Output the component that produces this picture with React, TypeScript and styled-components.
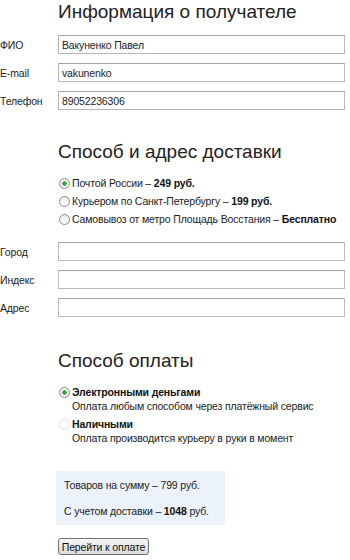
import React from "react";
import styled, { createGlobalStyle } from "styled-components";

const Global = createGlobalStyle`
  html, body { margin: 0; padding: 0; background: #fff; }
  body { font-family: "Liberation Sans", Arial, sans-serif; color: #222; font-size: 10.5px; letter-spacing: -0.15px; }
`;

const Page = styled.div`
  width: 350px;
  padding: 0 5px 0 0;
  box-sizing: border-box;
`;

const Heading = styled.h2<{ $top: number; $bottom: number }>`
  margin: ${(p) => p.$top}px 0 ${(p) => p.$bottom}px 58px;
  font-size: 19px;
  font-weight: normal;
  letter-spacing: 0;
  line-height: 24px;
  color: #222;
`;

const Fields = styled.div<{ $top?: number }>`
  display: flex;
  flex-direction: column;
  gap: 9px;
  margin-top: ${(p) => p.$top ?? 0}px;
`;

const Row = styled.label`
  display: grid;
  grid-template-columns: 58px 1fr;
  align-items: center;
`;

const Label = styled.span`
  color: #222;
`;

const Input = styled.input`
  height: 19px;
  box-sizing: border-box;
  border: 1px solid #b8b8b8;
  border-top-color: #a4a4a4;
  padding: 0 3px;
  font-family: "Liberation Sans", Arial, sans-serif;
  font-size: 10.5px;
  letter-spacing: -0.15px;
  color: #222;
  outline: none;
`;

const Options = styled.div<{ $gap: number }>`
  display: flex;
  flex-direction: column;
  gap: ${(p) => p.$gap}px;
  margin-left: 58px;
`;

const Option = styled.div`
  display: grid;
  grid-template-columns: 14px 1fr;
  align-items: start;
  line-height: 14px;
`;

const Radio = styled.span<{ $checked?: boolean; $faint?: boolean }>`
  width: 9px;
  height: 9px;
  margin: 2px 0 0 1px;
  border-radius: 50%;
  border: 1px solid ${(p) => (p.$faint ? "#e0e0e0" : "#8a8a8a")};
  background: ${(p) =>
    p.$checked
      ? "radial-gradient(circle, #3ca83c 0 2px, #f4f4f4 2.5px)"
      : p.$faint
      ? "#fff"
      : "linear-gradient(#ececec, #fff)"};
  box-sizing: content-box;
`;

const OptText = styled.div`
  color: #222;
`;

const B = styled.b`
  font-weight: bold;
  color: #111;
`;

const Summary = styled.div`
  margin: 26px 0 0 56px;
  width: 169px;
  background: #ebf2f9;
  padding: 7px 8px;
  box-sizing: border-box;
  display: flex;
  flex-direction: column;
  gap: 12px;
  line-height: 14px;
`;

const Button = styled.button`
  display: block;
  margin: 13px 0 0 58px;
  font-family: "Liberation Sans", Arial, sans-serif;
  font-size: 10.5px;
  letter-spacing: -0.15px;
  color: #111;
  height: 17px;
  width: 91px;
  padding: 0;
  border: 1px solid #707070;
  border-radius: 3px;
  background: linear-gradient(#f6f6f6, #dcdcdc);
  line-height: 14px;
`;

export default function App() {
  return (
    <Page>
      <Global />
      <Heading $top={0} $bottom={11}>Информация о получателе</Heading>
      <Fields>
        <Row><Label>ФИО</Label><Input defaultValue="Вакуненко Павел" /></Row>
        <Row><Label>E-mail</Label><Input defaultValue="vakunenko" /></Row>
        <Row><Label>Телефон</Label><Input defaultValue="89052236306" /></Row>
      </Fields>
      <Heading $top={30} $bottom={12}>Способ и адрес доставки</Heading>
      <Options $gap={4}>
        <Option><Radio $checked /><OptText>Почтой России – <B>249 руб.</B></OptText></Option>
        <Option><Radio /><OptText>Курьером по Санкт-Петербургу – <B>199 руб.</B></OptText></Option>
        <Option><Radio /><OptText>Самовывоз от метро Площадь Восстания – <B>Бесплатно</B></OptText></Option>
      </Options>
      <Fields $top={16}>
        <Row><Label>Город</Label><Input /></Row>
        <Row><Label>Индекс</Label><Input /></Row>
        <Row><Label>Адрес</Label><Input /></Row>
      </Fields>
      <Heading $top={32} $bottom={12}>Способ оплаты</Heading>
      <Options $gap={4}>
        <Option><Radio $checked /><OptText><B>Электронными деньгами</B><br />Оплата любым способом через платёжный сервис</OptText></Option>
        <Option><Radio $faint /><OptText><B>Наличными</B><br />Оплата производится курьеру в руки в момент</OptText></Option>
      </Options>
      <Summary>
        <div>Товаров на сумму – 799 руб.</div>
        <div>С учетом доставки – <B>1048</B> руб.</div>
      </Summary>
      <Button>Перейти к оплате</Button>
    </Page>
  );
}
